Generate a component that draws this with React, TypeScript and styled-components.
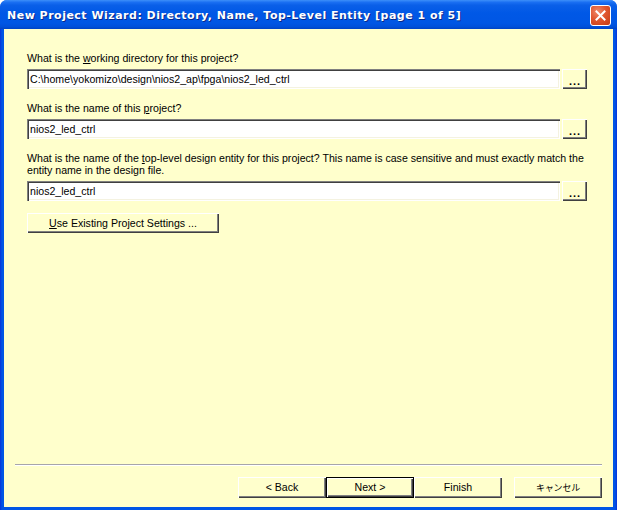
import React from "react";
import styled, { createGlobalStyle } from "styled-components";

const Global = createGlobalStyle`
  html, body { margin: 0; padding: 0; background: #ffffff; }
  body { font-family: "Liberation Sans", Arial, sans-serif; }
`;

const Window = styled.div`
  width: 617px;
  height: 510px;
  box-sizing: border-box;
  display: flex;
  flex-direction: column;
  background: linear-gradient(to bottom, #0a5fe8, #0045d8);
  border-radius: 7px 7px 0 0;
  overflow: hidden;
`;

const TitleBar = styled.div`
  height: 29px;
  flex: 0 0 29px;
  display: flex;
  align-items: center;
  justify-content: space-between;
  padding: 0 6px 0 7px;
  box-sizing: border-box;
  background: linear-gradient(
    to bottom,
    #3d8ff9 0%,
    #1a6ff2 8%,
    #0a5fe8 18%,
    #0058e6 45%,
    #0056e4 80%,
    #0050da 92%,
    #0043c4 100%
  );
`;

const TitleText = styled.span`
  color: #ffffff;
  font-family: "DejaVu Sans", Verdana, sans-serif;
  font-weight: bold;
  font-size: 11px;
  letter-spacing: 0.49px;
  text-shadow: 1px 1px 0 #0a2a8a;
  white-space: nowrap;
  margin-top: 1px;
`;

const CloseButton = styled.div`
  width: 21px;
  height: 21px;
  box-sizing: border-box;
  border: 1px solid #ffffff;
  border-radius: 3px;
  background: radial-gradient(circle at 35% 30%, #f08a6a 0%, #e0562f 45%, #c43a12 100%);
  display: flex;
  align-items: center;
  justify-content: center;
  margin-top: 2px;
`;

const Frame = styled.div`
  flex: 1;
  display: flex;
  padding: 0 4px 3px 4px;
  min-height: 0;
  background: linear-gradient(to right, #0831d9 0, #0055e5 2px, #0055e5 calc(100% - 2px), #0831d9 100%);
`;

const Content = styled.div`
  flex: 1;
  background: #ffffcc;
  display: flex;
  flex-direction: column;
  padding: 23px 26px 0 23px;
  font-size: 10.6px;
  color: #000000;
`;

const Field = styled.div<{ $top?: number }>`
  display: flex;
  flex-direction: column;
  gap: 5px;
  margin-top: ${(p) => p.$top ?? 0}px;
`;

const Label = styled.div`
  line-height: 12px;
  white-space: pre;
`;

const Key = styled.span`
  text-decoration: underline;
  text-underline-offset: 1px;
`;

const InputRow = styled.div`
  display: flex;
  gap: 2px;
  height: 20px;
`;

const TextBox = styled.div`
  flex: 1;
  background: #ffffff;
  box-sizing: border-box;
  box-shadow: inset 1px 1px 0 #808080, inset 2px 2px 0 #404040,
    inset -1px -1px 0 #ffffff, inset -2px -2px 0 #f4f2e0;
  padding: 0 3px;
  display: flex;
  align-items: center;
  line-height: 12px;
  white-space: nowrap;
  overflow: hidden;
`;

const RaisedButton = styled.div<{ $default?: boolean }>`
  box-sizing: border-box;
  background: #ffffcc;
  display: flex;
  align-items: center;
  justify-content: center;
  white-space: nowrap;
  box-shadow: ${(p) =>
    p.$default
      ? "inset 0 0 0 1px #000000, inset 2px 2px 0 #ffffff, inset -2px -2px 0 #404040, inset -3px -3px 0 #808080"
      : "inset 1px 1px 0 #ffffff, inset -1px -1px 0 #404040, inset -2px -2px 0 #808080"};
`;

const BrowseButton = styled(RaisedButton)`
  width: 25px;
  height: 20px;
  font-weight: bold;
  font-size: 11px;
  letter-spacing: 1px;
  padding: 4px 0 0 1px;
`;

const WideButton = styled(RaisedButton)`
  width: 192px;
  height: 20px;
  margin-top: 12px;
  padding-bottom: 1px;
`;

const Spacer = styled.div`
  flex: 1;
`;

const Footer = styled.div`
  display: flex;
  flex-direction: column;
  margin: 0 -15px 0 -12px;
  padding: 0 0 9px 0;
`;

const Separator = styled.div`
  height: 1px;
  background: #a7a6aa;
  border-bottom: 1px solid #ffffff;
  margin-bottom: 11px;
`;

const ButtonBar = styled.div`
  display: flex;
  justify-content: flex-end;
`;

const NavButton = styled(RaisedButton)<{ $gapLeft?: number }>`
  width: 88px;
  height: 21px;
  margin-left: ${(p) => p.$gapLeft ?? 0}px;
  padding-bottom: 1px;
`;

const CjkText = styled.span`
  font-family: "Noto Sans CJK JP", sans-serif;
  font-size: 9px;
  letter-spacing: -0.2px;
`;

export default function App() {
  return (
    <>
      <Global />
      <Window>
        <TitleBar>
          <TitleText>
            New Project Wizard: Directory, Name, Top-Level Entity [page 1 of 5]
          </TitleText>
          <CloseButton>
            <svg width="11" height="11" viewBox="0 0 11 11">
              <path
                d="M1.5 1.5 L9.5 9.5 M9.5 1.5 L1.5 9.5"
                stroke="#ffffff"
                strokeWidth="2"
                strokeLinecap="square"
              />
            </svg>
          </CloseButton>
        </TitleBar>
        <Frame>
          <Content>
            <Field>
              <Label>
                What is the <Key>w</Key>orking directory for this project?
              </Label>
              <InputRow>
                <TextBox>C:\home\yokomizo\design\nios2_ap\fpga\nios2_led_ctrl</TextBox>
                <BrowseButton>...</BrowseButton>
              </InputRow>
            </Field>
            <Field $top={13}>
              <Label>
                What is the name of this <Key>p</Key>roject?
              </Label>
              <InputRow>
                <TextBox>nios2_led_ctrl</TextBox>
                <BrowseButton>...</BrowseButton>
              </InputRow>
            </Field>
            <Field $top={13}>
              <Label>
                What is the name of the <Key>t</Key>op-level design entity for this project? This name is case sensitive and must exactly match the{"\n"}entity name in the design file.
              </Label>
              <InputRow>
                <TextBox>nios2_led_ctrl</TextBox>
                <BrowseButton>...</BrowseButton>
              </InputRow>
            </Field>
            <WideButton>
              <span>
                <Key>U</Key>se Existing Project Settings ...
              </span>
            </WideButton>
            <Spacer />
            <Footer>
              <Separator />
              <ButtonBar>
                <NavButton>&lt; Back</NavButton>
                <NavButton $default>Next &gt;</NavButton>
                <NavButton>Finish</NavButton>
                <NavButton $gapLeft={12}>
                  <CjkText>キャンセル</CjkText>
                </NavButton>
              </ButtonBar>
            </Footer>
          </Content>
        </Frame>
      </Window>
    </>
  );
}
